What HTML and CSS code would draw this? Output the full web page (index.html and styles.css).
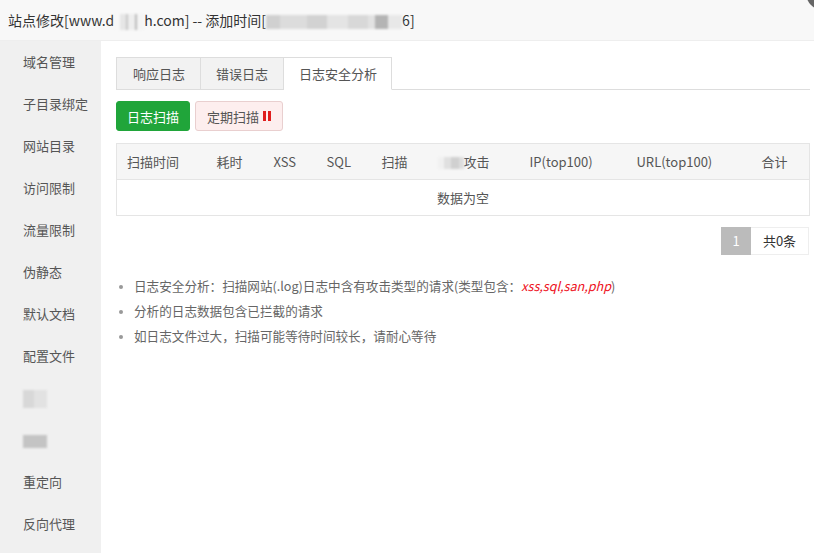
FILE: index.html
```html
<!DOCTYPE html>
<html>
<head>
<meta charset="utf-8">
<link rel="stylesheet" href="styles.css">
</head>
<body>
<div class="layer">
  <div class="title">站点修改[www.d<span class="blur blur-a"></span>h.com] -- 添加时间[<span class="blur blur-b"></span>6]</div>
  <span class="close"></span>
  <div class="body">
    <ul class="side">
      <li>域名管理</li>
      <li>子目录绑定</li>
      <li>网站目录</li>
      <li>访问限制</li>
      <li>流量限制</li>
      <li>伪静态</li>
      <li>默认文档</li>
      <li>配置文件</li>
      <li><span class="blur blur-c"></span></li>
      <li><span class="blur blur-d"></span></li>
      <li>重定向</li>
      <li>反向代理</li>
    </ul>
    <div class="main">
      <div class="tabs">
        <span class="tab">响应日志</span>
        <span class="tab">错误日志</span>
        <span class="tab active">日志安全分析</span>
      </div>
      <div class="btns">
        <button class="btn btn-green">日志扫描</button>
        <button class="btn btn-pink">定期扫描 <span class="pause"><i></i><i></i></span></button>
      </div>
      <table class="tbl">
        <thead>
          <tr>
            <th class="c1">扫描时间</th>
            <th class="c2">耗时</th>
            <th class="c3">XSS</th>
            <th class="c4">SQL</th>
            <th class="c5">扫描</th>
            <th class="c6"><span class="blur blur-e"></span>攻击</th>
            <th class="c7">IP(top100)</th>
            <th class="c8">URL(top100)</th>
            <th class="c9">合计</th>
          </tr>
        </thead>
        <tbody>
          <tr><td colspan="9" class="empty">数据为空</td></tr>
        </tbody>
      </table>
      <div class="pager">
        <span class="pg-cur">1</span><span class="pg-total">共0条</span>
      </div>
      <ul class="tips">
        <li>日志安全分析：扫描网站(.log)日志中含有攻击类型的请求(类型包含：<em>xss,sql,san,php</em>)</li>
        <li>分析的日志数据包含已拦截的请求</li>
        <li>如日志文件过大，扫描可能等待时间较长，请耐心等待</li>
      </ul>
    </div>
  </div>
</div>
</body>
</html>
```
FILE: styles.css
```css
* { box-sizing: border-box; }
html, body {
  margin: 0;
  padding: 0;
  width: 814px;
  height: 553px;
  overflow: hidden;
  background: #fff;
  font-family: "Noto Sans CJK SC", "Liberation Sans", sans-serif;
}
.layer {
  position: relative;
  width: 814px;
  height: 553px;
  display: flex;
  flex-direction: column;
}
.title {
  height: 41px;
  line-height: 40px;
  padding-left: 8px;
  background: #f8f8f8;
  border-bottom: 1px solid #eee;
  font-size: 14px;
  color: #333;
  white-space: nowrap;
}
.close {
  position: absolute;
  top: -24px;
  right: -26px;
  width: 34px;
  height: 34px;
  border-radius: 50%;
  background: #666;
}
.blur {
  display: inline-block;
  vertical-align: middle;
  filter: blur(1px);
}
.blur-a {
  width: 30px;
  height: 16px;
  background: linear-gradient(90deg, #f8f8f8 0 20%, #e6e6e6 20% 40%, #c8c8c8 40% 48%, #eee 48% 70%, #bbb 70% 76%, #f4f4f4 76%);
}
.blur-b {
  width: 136px;
  height: 14px;
  background: linear-gradient(90deg, #d0d0d0 0 10%, #dcdcdc 10% 30%, #d2d2d2 30% 45%, #e4e4e4 45% 60%, #d8d8d8 60% 75%, #e2e2e2 75% 80%, #b4b4b4 80% 90%, #e8e8e8 90%);
}
.blur-c {
  width: 24px;
  height: 18px;
  background: linear-gradient(90deg, #d8d8d8 0 45%, #e2e2e2 45%);
}
.blur-d {
  width: 24px;
  height: 13px;
  background: #c4c4c4;
}
.blur-e {
  width: 26px;
  height: 12px;
  background: linear-gradient(90deg, #f0f0f0 0 25%, #e0e0e0 25% 50%, #d0d0d0 50% 80%, #ddd 80%);
}
.body {
  flex: 1;
  display: flex;
  min-height: 0;
}
.side {
  width: 101px;
  flex: none;
  margin: 0;
  padding: 0;
  list-style: none;
  background: #f0f0f0;
}
.side li {
  height: 42px;
  line-height: 42px;
  padding-left: 23px;
  font-size: 13px;
  color: #555;
  white-space: nowrap;
}
.main {
  flex: 1;
  padding: 16px 5px 0 15px;
  font-size: 13px;
  color: #555;
}
.tabs {
  display: flex;
  height: 33px;
  border-bottom: 1px solid #ddd;
}
.tab {
  height: 33px;
  line-height: 31px;
  border: 1px solid #ddd;
  border-left: none;
  background: #f2f2f2;
  color: #555;
  padding: 0 15px;
}
.tab:first-child { border-left: 1px solid #ddd; padding: 0 15px 0 16px; }
.tab.active {
  background: #fff;
  border-bottom-color: #fff;
  padding: 0 14px 0 15px;
}
.btns {
  display: flex;
  gap: 5px;
  margin-top: 11px;
}
.btn {
  height: 30px;
  border-radius: 3px;
  font-family: inherit;
  font-size: 13px;
  padding: 0;
  display: flex;
  align-items: center;
  justify-content: center;
}
.btn-green {
  width: 74px;
  background: #20a53a;
  border: 1px solid #20a53a;
  color: #fff;
}
.btn-pink {
  width: 88px;
  background: #fdeeee;
  border: 1px solid #e9cfcf;
  color: #555;
  gap: 4px;
}
.pause {
  display: inline-flex;
  gap: 2px;
}
.pause i {
  display: block;
  width: 3px;
  height: 10px;
  background: #e01d1d;
}
.tbl {
  margin-top: 12px;
  width: 693px;
  border-collapse: collapse;
  border: 1px solid #e5e5e5;
  table-layout: fixed;
}
.tbl th {
  height: 36px;
  background: #f6f6f6;
  border-bottom: 1px solid #e5e5e5;
  font-weight: normal;
  text-align: left;
  padding: 0 0 1px 10px;
  color: #555;
  white-space: nowrap;
}
.c1 { width: 90px; }
.c2 { width: 57px; }
.c3 { width: 53px; }
.c4 { width: 55px; }
.c5 { width: 56px; }
.c6 { width: 92px; }
.c7 { width: 107px; }
.c8 { width: 125px; }
.c9 { width: 58px; }
.tbl td.empty {
  height: 36px;
  text-align: center;
  color: #555;
  padding-bottom: 1px;
}
.pager {
  display: flex;
  justify-content: flex-end;
  margin-top: 11px;
  width: 693px;
}
.pg-cur {
  width: 30px;
  height: 28px;
  line-height: 28px;
  text-align: center;
  background: #bbb;
  color: #fff;
}
.pg-total {
  width: 58px;
  height: 28px;
  line-height: 26px;
  text-align: center;
  border: 1px solid #eee;
  border-left: none;
  color: #333;
}
.tips {
  margin: 18px 0 0;
  padding: 0 0 0 18px;
  font-size: 12.6px;
  color: #666;
}
.tips li {
  line-height: 25px;
}
.tips li::marker {
  color: #999;
  font-size: 11px;
}
.tips em {
  color: #e12;
  font-style: italic;
}
```
